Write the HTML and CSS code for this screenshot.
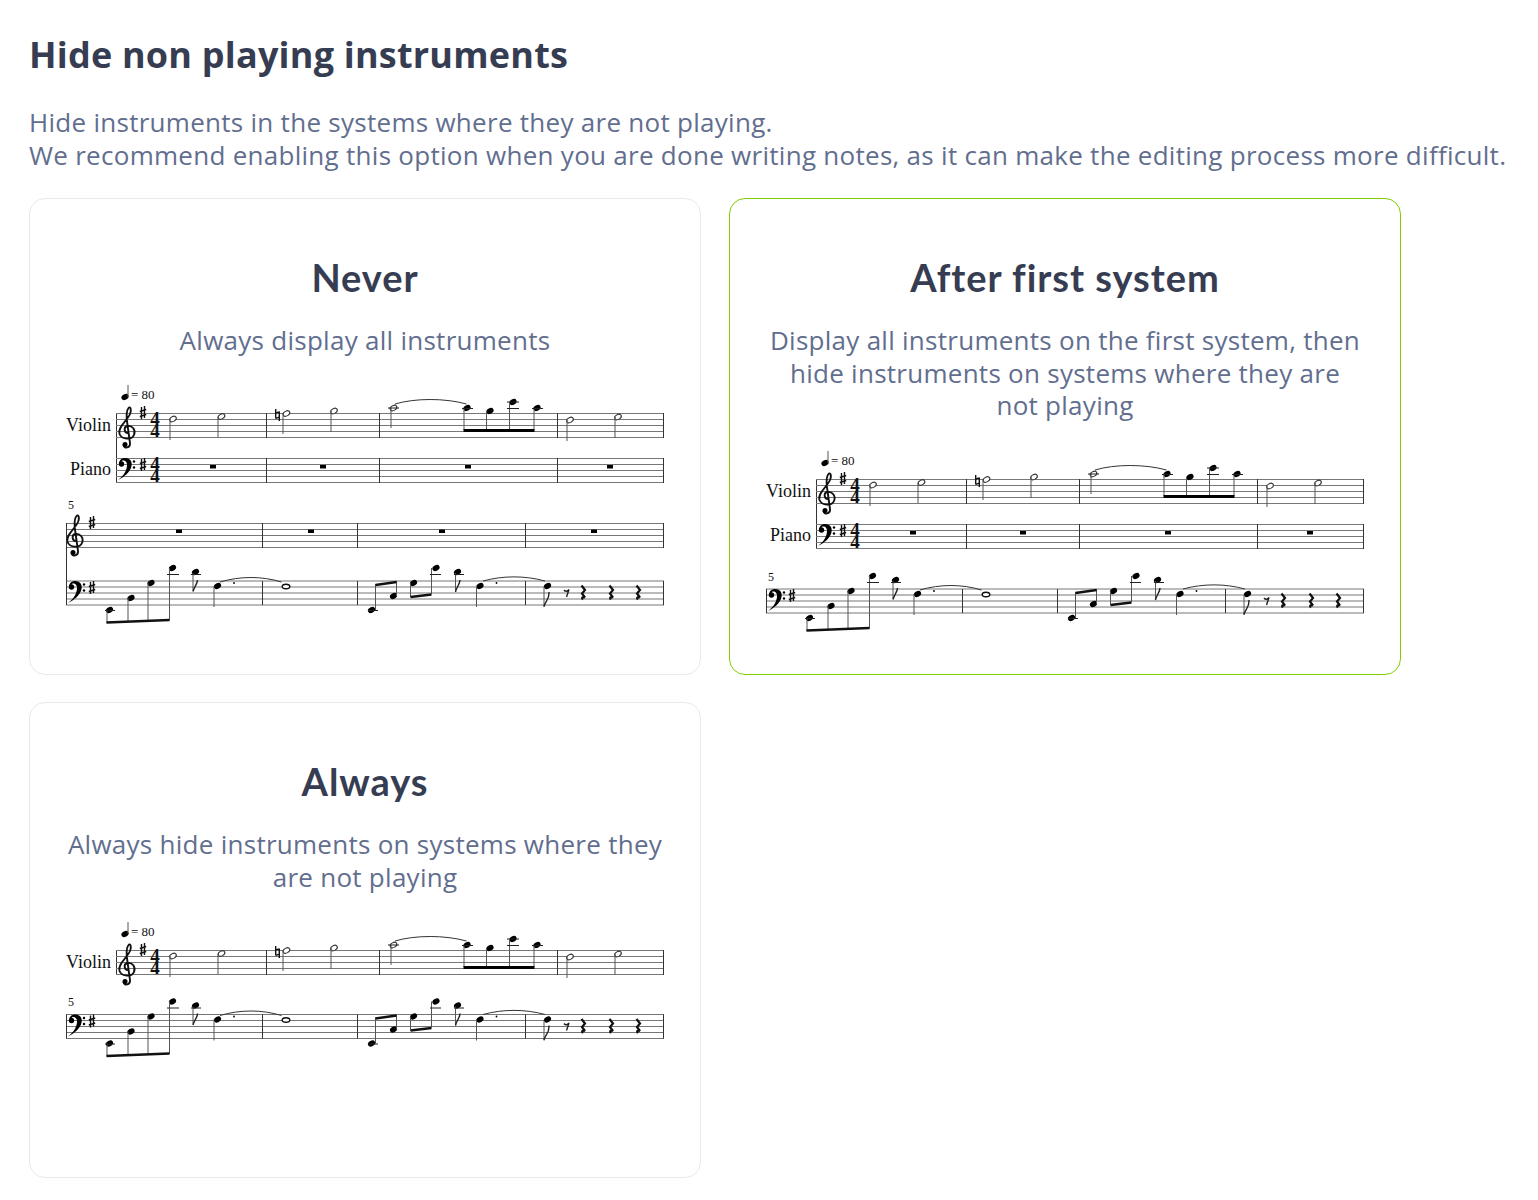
FILE: index.html
```html
<!DOCTYPE html>
<html>
<head>
    <title>Hide non playing instruments</title>
    <link rel="stylesheet" href="styles.css">
</head>
<body>
    <h1>Hide non playing instruments</h1>
    <p class="intro">Hide instruments in the systems where they are not playing.<br>We recommend enabling this option when you are done writing notes, as it can make the editing process more difficult.</p>

    <!-- shared score parts, drawn in the coordinates of the first card's score -->
    <svg class="score-defs" aria-hidden="true">
        <defs>
            <ellipse id="q" rx="3.8" ry="2.7" transform="rotate(-28)"/>
            <g id="h"><ellipse class="hollow" rx="3.5" ry="2.4" transform="rotate(-28)"/></g>
            <path id="sharp" class="glyph" d="M-1.5 -6V6M1.5 -7V5M-3.2 -1.5L3.2 -3.5M-3.2 3.5L3.2 1.5"/>
            <path id="natural" class="glyph" d="M-1.8 -6V3.5M1.8 -3.5V6M-1.8 -2L1.8 -3.2M-1.8 3.4L1.8 2.2"/>
            <g id="rest4"><path class="rest" d="M-1.5 -7L2 -2.5L-1 1L2 5C0 4 -2 5 0 7"/></g>
            <g id="treble">
                <path class="clef" d="M128 433C124 433 123.5 427 127 426C132.500 425 136 430 134 435C132 440 122 440 119.500 434C117.500 427 127 421 130 414C132 409 130 406 128.500 408C126 411 126 416 127.500 425L130 443C130.500 448 124 449 123.500 445"/>
                <circle cx="125" cy="444.500" r="2.500"/>
            </g>
            <g id="bass">
                <circle cx="121.500" cy="464" r="2.700"/>
                <path d="M119 464C119 460 122 458 125 458C130.500 458 132.500 462 131.500 466C130.500 472 124 477 118 480C122 477 126 473 127 466C127.500 462 125 460 122.500 460.500Z"/>
                <circle cx="134" cy="461.500" r="1.200"/>
                <circle cx="134" cy="467.500" r="1.200"/>
            </g>

            <g id="violin-staff">
                <path class="staff" d="M116 413.500H664M116 419.500H664M116 425.500H664M116 431.500H664M116 437.500H664"/>
                <path class="bar" d="M266.500 413V438M379.500 413V438M557.500 413V438M663.500 413V438"/>
                <use href="#q" x="125" y="397"/>
                <path class="stem" d="M128 385V397"/>
                <text class="tempo" x="131" y="399">= 80</text>
                <text class="instrument" x="111" y="431">Violin</text>
                <use href="#treble"/>
                <use href="#sharp" x="143" y="413"/>
                <text class="time" x="155" y="425">4</text>
                <text class="time" x="155" y="437">4</text>
                <use href="#h" x="173" y="419"/>
                <use href="#h" x="221.500" y="416.500"/>
                <use href="#natural" x="277.500" y="415"/>
                <use href="#h" x="286.500" y="413.500"/>
                <use href="#h" x="334" y="411"/>
                <use href="#h" x="393.500" y="408"/>
                <use href="#q" x="467" y="408"/>
                <use href="#q" x="490" y="411"/>
                <use href="#q" x="513" y="402"/>
                <use href="#q" x="537" y="408"/>
                <use href="#h" x="570" y="420"/>
                <use href="#h" x="618" y="417"/>
                <path class="stem" d="M170 419V440M218 417V437M283 414V434M331 411V432M391 408V428M464 408V430M486.500 411V430M509.500 402V430M534 408V430M567 420V441M615 417V438"/>
                <path class="ledger" d="M388 408H399M462 408.500H473M507 402H519M507 408.500H519M532 408.500H543"/>
                <path class="slur" d="M395 404C415 398 445 398 466.500 404"/>
                <rect x="463.500" y="429" width="71" height="3"/>
            </g>

            <g id="piano-staff">
                <path class="staff" d="M116 458.500H664M116 464.500H664M116 470.500H664M116 476.500H664M116 482.500H664"/>
                <path class="bar" d="M266.500 458V483M379.500 458V483M557.500 458V483M663.500 458V483"/>
                <text class="instrument" x="111" y="475">Piano</text>
                <use href="#bass"/>
                <use href="#sharp" x="143" y="465"/>
                <text class="time" x="155" y="470">4</text>
                <text class="time" x="155" y="482">4</text>
                <rect x="210" y="465" width="6" height="3.500"/>
                <rect x="320" y="465" width="6" height="3.500"/>
                <rect x="465" y="465" width="6" height="3.500"/>
                <rect x="607" y="465" width="6" height="3.500"/>
            </g>

            <g id="treble-line">
                <path class="staff" d="M66 523.500H664M66 529.500H664M66 535.500H664M66 541.500H664M66 547.500H664"/>
                <path class="bar" d="M262.500 523V548M357.500 523V548M525.500 523V548M663.500 523V548M66.500 523V548"/>
                <use href="#treble" x="-52" y="108"/>
                <use href="#sharp" x="92" y="523"/>
                <rect x="176" y="529.500" width="6" height="3.500"/>
                <rect x="308" y="529.500" width="6" height="3.500"/>
                <rect x="439" y="529.500" width="6" height="3.500"/>
                <rect x="591" y="529.500" width="6" height="3.500"/>
            </g>

            <g id="bass-line">
                <path class="staff" d="M66 581H664M66 587H664M66 593H664M66 599H664M66 605H664"/>
                <path class="bar" d="M262.500 581V605M357.500 581V605M525.500 581V605M663.500 581V605M66.500 581V605"/>
                <use href="#bass" x="-50" y="123"/>
                <use href="#sharp" x="92" y="588"/>
                <use href="#q" x="109.500" y="610"/>
                <use href="#q" x="131" y="598"/>
                <use href="#q" x="151" y="583"/>
                <use href="#q" x="172.500" y="568"/>
                <use href="#q" x="195.500" y="572"/>
                <use href="#q" x="217.500" y="586"/>
                <use href="#q" x="371.500" y="610"/>
                <use href="#q" x="393.500" y="596"/>
                <use href="#q" x="413.500" y="583"/>
                <use href="#q" x="436" y="568"/>
                <use href="#q" x="457.500" y="572"/>
                <use href="#q" x="480" y="586"/>
                <use href="#q" x="547.500" y="586"/>
                <ellipse class="whole" cx="286" cy="586.500" rx="3.800" ry="2.300"/>
                <path class="stem" d="M107 610V623M128 598V622M148 583V621.500M169.500 568V620.500M193 573V591M214 586V607M375.500 610V584M396.500 596V581M410.500 583V597M431.500 568V594M455.500 573V592M476.500 586V607M544 587V607"/>
                <path class="ledger" d="M105 610.500H115M167 574.500H179M191 574.500H201M368 610.500H378M430 574.500H441M454 574.500H464"/>
                <path class="beam" d="M106.500 622.500L169.500 620M375.500 585L396.500 582M410.500 597L431.500 594.500"/>
                <path class="flag" d="M193 591.500C194 587 197.500 584 197.500 580M455.500 592C456.500 587 460 584 460 580M544 606.500C545 601 549.500 600 549 592"/>
                <path class="slur" d="M220 582C240 576 262 576 281.500 582M483 581C503 575.500 525 575.500 545 581"/>
                <circle cx="234" cy="583" r="0.900"/>
                <circle cx="496.500" cy="583" r="0.900"/>
                <path class="flag" d="M564 590C565.500 592 567.500 591.500 569 589.500L566.500 597"/>
                <use href="#rest4" x="583" y="592.500"/>
                <use href="#rest4" x="611" y="592.500"/>
                <use href="#rest4" x="638" y="592.500"/>
            </g>
        </defs>
    </svg>

    <div class="options">
        <div class="option">
            <h2>Never</h2>
            <p>Always display all instruments</p>
            <svg class="score" viewBox="66 384 600 245">
                <path class="bar" d="M116.500 413V483"/>
                <use href="#violin-staff"/>
                <use href="#piano-staff"/>
                <text class="measure" x="68" y="509">5</text>
                <use href="#treble-line"/>
                <use href="#bass-line"/>
                <path class="bar" d="M66.500 523V605"/>
            </svg>
        </div>

        <div class="option selected">
            <h2>After first system</h2>
            <p>Display all instruments on the first system, then hide instruments on systems where they are not playing</p>
            <svg class="score" viewBox="66 384 600 245">
                <path class="bar" d="M116.500 414V484"/>
                <use href="#violin-staff" y="1"/>
                <use href="#piano-staff" y="1"/>
                <text class="measure" x="68" y="516">5</text>
                <use href="#bass-line" y="-57"/>
            </svg>
        </div>

        <div class="option">
            <h2>Always</h2>
            <p>Always hide instruments on systems where they are not playing</p>
            <svg class="score" viewBox="66 384 600 245">
                <path class="bar" d="M116.500 414V439"/>
                <use href="#violin-staff" y="1"/>
                <text class="measure" x="68" y="470">5</text>
                <use href="#bass-line" y="-102.500"/>
            </svg>
        </div>
    </div>
</body>
</html>
```

FILE: styles.css
```css
body {
    margin: 0;
    padding: 0 0 0 29px;
    font-family: "Open Sans", sans-serif;
    background-color: #fff;
    color: #626e8e;
}
h1 {
    margin: 0;
    padding-top: 30px;
    font-size: 36px;
    line-height: 50px;
    font-weight: 700;
    letter-spacing: 0.21px;
    color: #363d52;
}
.intro {
    margin: 26px 0 26px;
    font-size: 26px;
    line-height: 33px;
    letter-spacing: 0.28px;
    white-space: nowrap;
}
.options {
    display: grid;
    grid-template-columns: 672px 672px;
    grid-template-rows: 476.5px 476px;
    column-gap: 28px;
    row-gap: 27.5px;
}
.option {
    box-sizing: border-box;
    padding: 56px 36px 0;
    border: 1px solid #e8e9ef;
    border-radius: 16px;
    text-align: center;
}
.option.selected {
    border-color: #7ed100;
}
.option h2 {
    margin: 0 0 25px;
    font-family: Lato, sans-serif;
    font-size: 38px;
    line-height: 44px;
    font-weight: 700;
    letter-spacing: 0.95px;
    font-variant-ligatures: none;
    color: #363d52;
}
.option p {
    margin: 0 0 27px;
    font-size: 26px;
    line-height: 32.5px;
    letter-spacing: 0.27px;
}

/* sheet music */
.score-defs {
    position: absolute;
    width: 0;
    height: 0;
}
.score {
    display: block;
    width: 600px;
    height: 245px;
}
.score text,
.score-defs text {
    font-family: "Liberation Serif", serif;
    fill: #111;
}
.score .measure { font-size: 12px; }
.score-defs .instrument { font-size: 18px; text-anchor: end; }
.score-defs .tempo { font-size: 13px; }
.score-defs .time { font-size: 19px; font-weight: 700; text-anchor: middle; }
.staff { fill: none; stroke: #777; stroke-width: 1; }
.bar { fill: none; stroke: #333; stroke-width: 1; }
.stem { fill: none; stroke: #555; stroke-width: 1; }
.ledger { fill: none; stroke: #222; stroke-width: 1; }
.slur { fill: none; stroke: #333; stroke-width: 1; }
.beam { fill: none; stroke: #111; stroke-width: 2.5; }
.flag { fill: none; stroke: #222; stroke-width: 1.4; }
.glyph { fill: none; stroke: #111; stroke-width: 1.4; }
.rest { fill: none; stroke: #111; stroke-width: 2.2; }
.clef { fill: none; stroke: #111; stroke-width: 1.9; }
.hollow { fill: #fff; stroke: #333; stroke-width: 1.1; }
.whole { fill: #fff; stroke: #111; stroke-width: 1.4; }
```
